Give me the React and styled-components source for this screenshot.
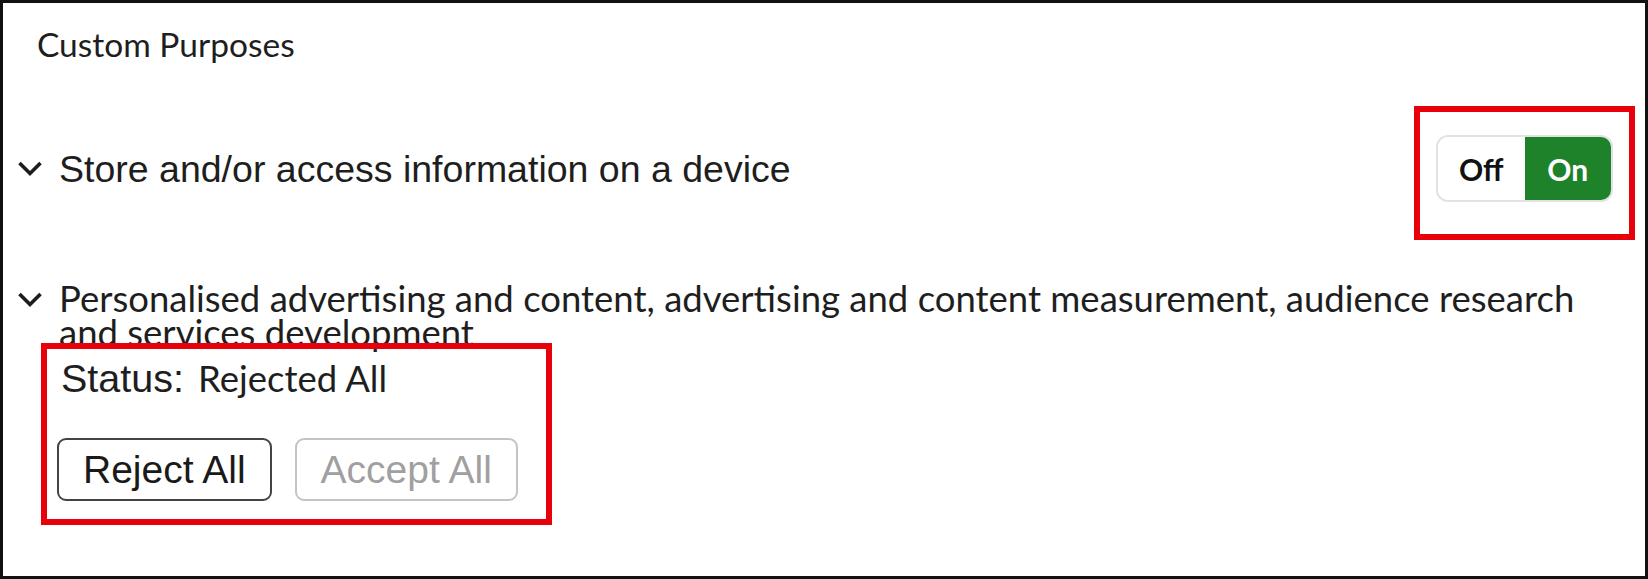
import React from 'react';
import styled, { createGlobalStyle } from 'styled-components';

const GlobalStyle = createGlobalStyle`
    html, body {
        margin: 0;
        padding: 0;
        background: #fff;
    }
`;

const Frame = styled.div`
    position: relative;
    box-sizing: border-box;
    width: 1648px;
    height: 579px;
    border: 3px solid #111;
    padding: 0 32px 0 14px;
    background: #fff;
    color: #1e1e1e;
    overflow: hidden;
`;

const Title = styled.h2`
    margin: 21px 0 0 20px;
    font-family: Lato, "Liberation Sans", sans-serif;
    font-weight: 400;
    font-size: 33.5px;
    line-height: 40px;
    color: #1e1e1e;
`;

const PurposeRow = styled.div`
    display: flex;
    align-items: ${props => props.$top ? 'flex-start' : 'center'};
    margin-top: ${props => props.$gap}px;
    min-height: ${props => props.$height || 0}px;
`;

const ChevronBox = styled.span`
    display: flex;
    width: 26px;
    height: 17px;
    margin: ${props => props.$top ? '10px' : '0'} 16px 0 0;
    flex-shrink: 0;
`;

const Chevron = ({ top }) => (
    <ChevronBox $top={top}>
        <svg width="26" height="17" viewBox="0 0 26 17">
            <polyline points="2.5,3 13,13.5 23.5,3" fill="none" stroke="#1c1c1c" strokeWidth="3.6" />
        </svg>
    </ChevronBox>
);

const PurposeLabel = styled.div`
    font-family: ${props => props.$humanist ? 'Lato, "Liberation Sans", sans-serif' : '"Liberation Sans", Arial, sans-serif'};
    font-size: ${props => props.$humanist ? 36.5 : 37.5}px;
    line-height: 34px;
    color: #1e1e1e;
    max-width: ${props => props.$humanist ? '1540px' : 'none'};
`;

const Toggle = styled.div`
    display: flex;
    margin-left: auto;
    width: 177px;
    height: 67px;
    box-sizing: border-box;
    border: 2px solid #e2e2e2;
    border-radius: 12px;
    overflow: hidden;
`;

const ToggleOption = styled.div`
    flex: 1;
    display: flex;
    align-items: center;
    justify-content: center;
    font-family: Lato, "Liberation Sans", sans-serif;
    font-weight: 700;
    font-size: 30px;
    background: ${props => props.$active ? '#1e822a' : '#fff'};
    color: ${props => props.$active ? '#fff' : '#111'};
`;

const StatusPanel = styled.div`
    display: flex;
    flex-direction: column;
    padding-left: 44px;
`;

const StatusLine = styled.div`
    display: flex;
    align-items: baseline;
    gap: 14px;
    margin-top: 7px;
    line-height: 44px;
`;

const StatusLabel = styled.span`
    font-family: "Liberation Sans", Arial, sans-serif;
    font-size: 39.5px;
    color: #1e1e1e;
`;

const StatusValue = styled.span`
    font-family: Lato, "Liberation Sans", sans-serif;
    font-size: 36.5px;
    color: #1e1e1e;
`;

const ButtonRow = styled.div`
    display: flex;
    gap: 23px;
    margin-top: 38px;
    margin-left: -4px;
`;

const ActionButton = styled.button`
    box-sizing: border-box;
    height: 63px;
    padding: 0 24px;
    background: #fff;
    border: 2px solid ${props => props.disabled ? '#c4c4c4' : '#444'};
    border-radius: 9px;
    font-family: "Liberation Sans", Arial, sans-serif;
    font-size: 39px;
    color: ${props => props.disabled ? '#a0a0a0' : '#1a1a1a'};
`;

// red call-out boxes drawn over the screenshot
const Annotation = styled.div`
    position: absolute;
    box-sizing: border-box;
    left: ${props => props.$x}px;
    top: ${props => props.$y}px;
    width: ${props => props.$w}px;
    height: ${props => props.$h}px;
    border: 6px solid #e8000b;
    pointer-events: none;
`;

export default function App() {
    return (
        <>
            <GlobalStyle />
            <Frame>
                <Title>Custom Purposes</Title>
                <PurposeRow $gap={71} $height={67}>
                    <Chevron />
                    <PurposeLabel>Store and/or access information on a device</PurposeLabel>
                    <Toggle>
                        <ToggleOption>Off</ToggleOption>
                        <ToggleOption $active>On</ToggleOption>
                    </Toggle>
                </PurposeRow>
                <PurposeRow $gap={79} $top>
                    <Chevron top />
                    <PurposeLabel $humanist>
                        Personalised advertising and content, advertising and content measurement, audience research and services development
                    </PurposeLabel>
                </PurposeRow>
                <StatusPanel>
                    <StatusLine>
                        <StatusLabel>Status:</StatusLabel>
                        <StatusValue>Rejected All</StatusValue>
                    </StatusLine>
                    <ButtonRow>
                        <ActionButton>Reject All</ActionButton>
                        <ActionButton disabled>Accept All</ActionButton>
                    </ButtonRow>
                </StatusPanel>
                <Annotation $x={1411} $y={103} $w={221} $h={134} />
                <Annotation $x={38} $y={340} $w={511} $h={182} />
            </Frame>
        </>
    );
}
